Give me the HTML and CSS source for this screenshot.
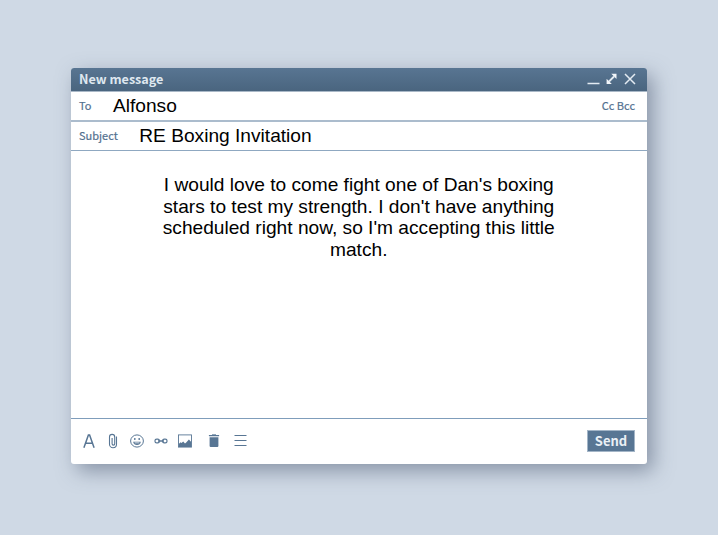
FILE: index.html
```html
<!DOCTYPE html>
<html lang="en">
<head>
    <meta charset="UTF-8">
    <meta name="viewport" content="width=device-width, initial-scale=1.0">
    <title>New message</title>
    <link rel="stylesheet" href="styles.css">
</head>
<body>
    <div class="window">
        <div class="title-bar">
            <span class="title">New message</span>
            <svg class="controls" width="50" height="14" viewBox="0 0 50 14">
                <path d="M0.5 11.5h12" stroke-width="1.4"/>
                <path d="M22 9.5l5-5" stroke-width="1.8"/>
                <path class="solid" d="M24.3 1.8h5.2v5.2zM19.6 6.7v5.2h5.2z"/>
                <path d="M38 2l10 10M48 2l-10 10" stroke-width="1.5"/>
            </svg>
        </div>
        <div class="row row-to">
            <span class="label">To</span>
            <span class="value">Alfonso</span>
            <span class="copies">Cc Bcc</span>
        </div>
        <div class="row row-subject">
            <span class="label">Subject</span>
            <span class="value">RE Boxing Invitation</span>
        </div>
        <div class="message">
            <p>I would love to come fight one of Dan's boxing<br>stars to test my strength. I don't have anything<br>scheduled right now, so I'm accepting this little<br>match.</p>
        </div>
        <div class="footer">
            <div class="tools">
                <svg width="12" height="16" viewBox="0 0 12 16"><path d="M0.9 14.7L5.4 2h1.2l4.5 12.7M2.7 10.2h6.6" stroke-width="1.5"/></svg>
                <svg width="10" height="16" viewBox="0 0 10 16"><path d="M8.5 3.5v7.7a3.5 3.5 0 0 1-7 0V4a2.6 2.6 0 0 1 5.2 0v6.8a1.3 1.3 0 0 1-2.6 0V5" stroke-width="1.1"/></svg>
                <svg width="14" height="14" viewBox="0 0 14 14"><ellipse cx="7" cy="7" rx="6.4" ry="6.1" stroke-width="1"/><path class="solid" d="M3.2 7.7h7.6c-.2 2.1-1.8 3.3-3.8 3.3S3.4 9.8 3.2 7.7z"/><path class="tooth" d="M4.6 8.4h4.8v.9H4.6z"/><circle class="solid" cx="4.8" cy="5" r=".9"/><circle class="solid" cx="9.2" cy="5" r=".9"/></svg>
                <svg width="14" height="6" viewBox="0 0 14 6"><rect x="1" y="1.1" width="4.4" height="3.8" rx="1.7" stroke-width="1.2"/><rect x="8.6" y="1.1" width="4.4" height="3.8" rx="1.7" stroke-width="1.2"/><path d="M4 3h6" stroke-width="1.3"/></svg>
                <svg width="14" height="14" viewBox="0 0 14 14"><rect x="0.5" y="0.9" width="13" height="12.2" stroke-width="0.9"/><path class="solid" d="M1 13V9.7l1.5-1.4 1 .8 1.7-1.5 1.8 1.8 1.2-.8 2.7-3L13 7.8V13z"/></svg>
                <svg width="12" height="14" viewBox="0 0 12 14"><path class="solid" d="M1.6 3.2h8.8V12q0 1-1 1H2.6q-1 0-1-1z"/><path d="M.9 1.6h10.2" stroke-width="1.1"/><path d="M4 .7h4" stroke-width=".8"/></svg>
                <svg width="13" height="14" viewBox="0 0 13 14"><path d="M.5 1.5h12M.5 6.5h12M.5 11.5h12" stroke-width="1.2"/></svg>
            </div>
            <button class="send" type="button">Send</button>
        </div>
    </div>
</body>
</html>
```

FILE: styles.css
```css
* {
    box-sizing: border-box;
}
body {
    margin: 0;
    height: 535px;
    padding: 68px 71px 0 70.5px;
    background-color: #cfd9e5;
    font-family: "Noto Sans CJK SC", "Open Sans", sans-serif;
    color: #52708f;
}
.window {
    display: flex;
    flex-direction: column;
    height: 396px;
    border-radius: 3px;
    overflow: hidden;
    background-color: #fff;
    box-shadow: 6px 7px 20px rgba(70, 85, 110, 0.52);
}
.title-bar {
    display: flex;
    align-items: center;
    justify-content: space-between;
    height: 24px;
    padding: 0 10px 1px 8.5px;
    background: linear-gradient(#587592, #4a657f);
    border-bottom: 1px solid #a9b8c7;
}
.title {
    font-size: 12.6px;
    font-weight: bold;
    line-height: 22px;
    color: #dfe8f0;
}
.controls {
    stroke: #e3ebf2;
    fill: none;
}
.controls .solid {
    fill: #f2f6fa;
    stroke: none;
}
.row {
    display: flex;
    align-items: center;
    padding: 0 12px 0 8.5px;
    border-bottom: 2px solid #abbccd;
}
.row-to {
    height: 30px;
}
.row-subject {
    height: 29px;
    padding-bottom: 1px;
    border-bottom-width: 1px;
    border-color: #8fa8c1;
}
.label,
.copies {
    font-size: 11px;
    line-height: 16px;
    padding-bottom: 2px;
    -webkit-text-stroke: 0.2px #52708f;
}
.copies {
    margin-left: auto;
}
.value {
    font-family: "Liberation Sans", Arial, sans-serif;
    font-size: 19.15px;
    line-height: 24px;
    color: #000;
    margin-left: 21.5px;
}
.message {
    flex: 1;
    padding-top: 23px;
}
.message p {
    margin: 0;
    font-family: "Liberation Sans", Arial, sans-serif;
    font-size: 19.15px;
    line-height: 21.7px;
    text-align: center;
    color: #000;
}
.footer {
    display: flex;
    align-items: center;
    justify-content: space-between;
    height: 46px;
    padding: 0 12px 1px 6.5px;
    border-top: 1.5px solid #7f9dbb;
}
.tools {
    display: grid;
    grid-template-columns: repeat(5, 24px) 33px 20px;
    align-items: center;
    justify-items: center;
}
.tools svg {
    fill: none;
    stroke: #587694;
}
.tools .solid {
    fill: #587694;
    stroke: none;
}
.tools .tooth {
    fill: #fff;
    stroke: none;
}
.send {
    width: 48px;
    height: 22px;
    padding: 0;
    border: 1px solid #a3b5c7;
    background-color: #587694;
    color: #eaf0f6;
    font-family: inherit;
    font-size: 13px;
    font-weight: bold;
    line-height: 20px;
}
```
